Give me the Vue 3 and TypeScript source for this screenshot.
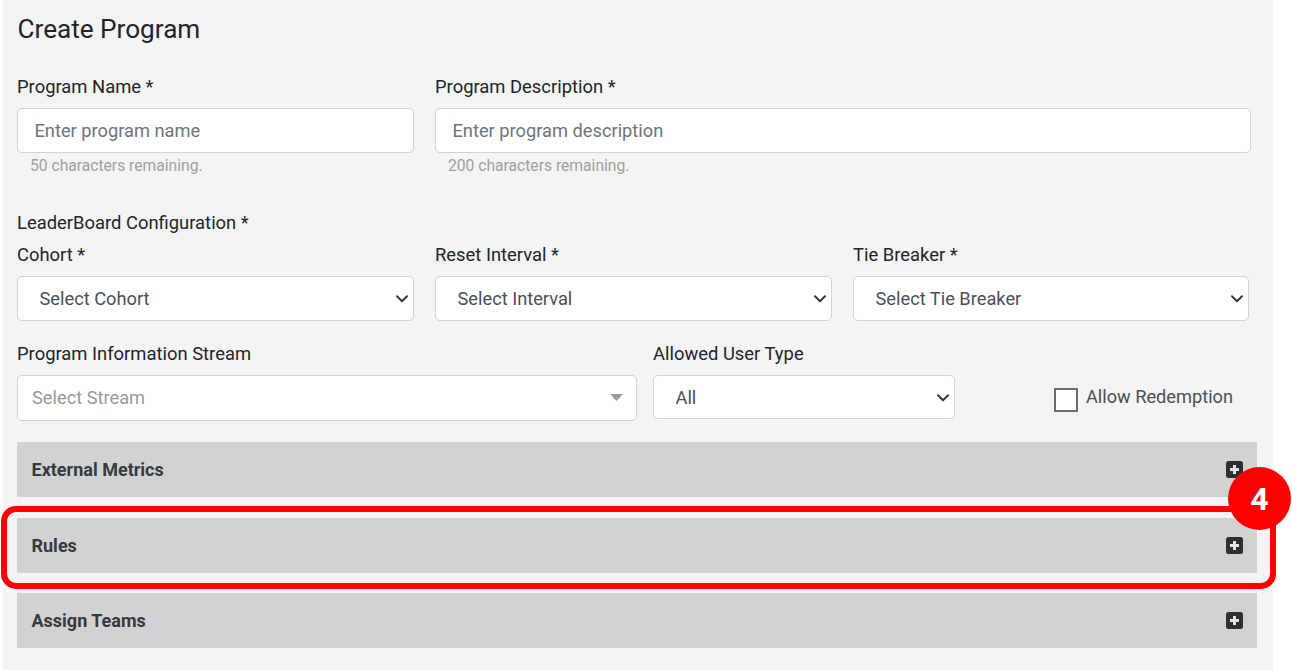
<script setup lang="ts">
const selectsTop = [
  { label: 'Cohort *', value: 'Select Cohort' },
  { label: 'Reset Interval *', value: 'Select Interval' },
  { label: 'Tie Breaker *', value: 'Select Tie Breaker' },
]
const sections = ['External Metrics', 'Rules', 'Assign Teams']
</script>

<template>
  <div class="page">
    <main class="panel">
      <h1 class="title">Create Program</h1>

      <div class="row row-text">
        <div class="field name">
          <label class="label">Program Name *</label>
          <input class="control input" placeholder="Enter program name" />
          <small class="hint">50 characters remaining.</small>
        </div>
        <div class="field desc">
          <label class="label">Program Description *</label>
          <input class="control input" placeholder="Enter program description" />
          <small class="hint">200 characters remaining.</small>
        </div>
      </div>

      <div class="label group-label">LeaderBoard Configuration *</div>
      <div class="row row-select">
        <div v-for="s in selectsTop" :key="s.label" class="field third">
          <label class="label">{{ s.label }}</label>
          <div class="select-wrap">
            <select class="control select"><option>{{ s.value }}</option></select>
            <svg class="chev" width="12" height="8" viewBox="0 0 12 8"><path d="M1 1.2 6 6.2l5-5" fill="none" stroke="#343a40" stroke-width="2" stroke-linecap="round" stroke-linejoin="round" /></svg>
          </div>
        </div>
      </div>

      <div class="row row-stream">
        <div class="field stream">
          <label class="label">Program Information Stream</label>
          <div class="select-wrap">
            <select class="control select stream-select"><option>Select Stream</option></select>
            <svg class="caret" width="13" height="7" viewBox="0 0 13 7"><path d="M0 0h13L6.5 7z" fill="#999" /></svg>
          </div>
        </div>
        <div class="field user">
          <label class="label">Allowed User Type</label>
          <div class="select-wrap">
            <select class="control select user-select"><option>All</option></select>
            <svg class="chev" width="12" height="8" viewBox="0 0 12 8"><path d="M1 1.2 6 6.2l5-5" fill="none" stroke="#343a40" stroke-width="2" stroke-linecap="round" stroke-linejoin="round" /></svg>
          </div>
        </div>
        <label class="check">
          <span class="box"></span>
          <span class="check-text">Allow Redemption</span>
        </label>
      </div>

      <div class="sections">
        <section v-for="s in sections" :key="s" class="section">
          <span class="section-title">{{ s }}</span>
          <svg class="plus" width="17" height="17" viewBox="0 0 17 17">
            <rect width="17" height="17" rx="2.5" fill="#2f2f2f" />
            <path d="M8.5 4v9M4 8.5h9" stroke="#e4e4e4" stroke-width="3" />
          </svg>
        </section>
      </div>
    </main>

    <div class="highlight"></div>
    <div class="badge">4</div>
  </div>
</template>

<style>
html, body { margin: 0; background: #fff; }
</style>

<style scoped>
.page {
  position: relative;
  width: 1292px;
  height: 670px;
  overflow: hidden;
  background: #fff;
  font-family: Roboto, "Liberation Sans", sans-serif;
  color: #212529;
}
.panel {
  box-sizing: border-box;
  width: 1270px;
  height: 670px;
  margin-left: 3px;
  padding: 0 16px 0 14px;
  background: #f4f4f4;
}
.title {
  box-sizing: border-box;
  height: 75px;
  margin: 0;
  padding: 13px 0 0 0.5px;
  font-size: 26.15px;
  font-weight: 400;
  line-height: 32px;
}
.row { display: flex; gap: 21px; }
.field { display: flex; flex-direction: column; }
.label {
  display: block;
  font-size: 18.4px;
  font-weight: 400;
  line-height: 24px;
}
.name { width: 397px; }
.desc { width: 816px; }
.third { width: 397px; }
.third:last-child { width: 396px; }
.control {
  box-sizing: border-box;
  display: block;
  width: 100%;
  height: 45px;
  margin: 0;
  background: #fff;
  border: 1px solid #ced4da;
  border-radius: 5px;
  outline: none;
  font-family: inherit;
  font-size: 18.25px;
  color: #495057;
}
.row-text { height: 135px; }
.row-text .label { margin-bottom: 9px; }
.input { padding: 0 16.5px; }
.input::placeholder { color: #6c757d; opacity: 1; }
.hint {
  display: block;
  margin: 3px 0 0 13px;
  font-size: 15.65px;
  line-height: 20px;
  color: #a0a0a0;
}
.group-label { line-height: 25px; }
.row-select { margin-top: 7px; }
.row-select .label { line-height: 25px; margin-bottom: 9px; }
.select-wrap { position: relative; }
.select {
  appearance: none;
  padding: 0 40px 0 21.5px;
}
.chev {
  position: absolute;
  right: 6px;
  top: 19px;
  pointer-events: none;
}
.row-stream {
  margin-top: 20px;
  gap: 16px;
  align-items: flex-start;
}
.row-stream .label { line-height: 25px; margin-bottom: 9px; }
.stream { width: 620px; }
.user { width: 302px; }
.stream-select {
  height: 46px;
  padding: 0 40px 2px 14px;
  color: #999;
}
.caret {
  position: absolute;
  right: 14px;
  top: 19px;
  pointer-events: none;
}
.user-select { height: 44px; }
.check {
  display: flex;
  align-items: flex-start;
  margin: 46px 0 0 83px;
  gap: 8px;
}
.box {
  box-sizing: border-box;
  width: 24px;
  height: 24px;
  margin-top: 1px;
  background: #fff;
  border: 2px solid #6b6b6b;
  border-radius: 1px;
}
.check-text {
  font-size: 18.2px;
  line-height: 24px;
  color: #495057;
  margin-top: -2px;
}
.sections {
  display: flex;
  flex-direction: column;
  gap: 20.5px;
  margin-top: 21px;
}
.section {
  box-sizing: border-box;
  height: 55px;
  padding: 0 14px 0 14.5px;
  display: flex;
  align-items: center;
  justify-content: space-between;
  background: #d2d2d2;
}
.section-title {
  font-size: 18px;
  font-weight: 700;
  color: #343a40;
}
.highlight {
  position: absolute;
  left: 1px;
  top: 506px;
  width: 1275px;
  height: 83px;
  box-sizing: border-box;
  border: 6px solid #fe0000;
  border-radius: 15px;
}
.badge {
  position: absolute;
  left: 1228px;
  top: 467px;
  width: 63px;
  height: 63px;
  border-radius: 50%;
  background: #fe0000;
  color: #fff;
  font-size: 32px;
  font-weight: 700;
  line-height: 65px;
  text-align: center;
}
</style>
